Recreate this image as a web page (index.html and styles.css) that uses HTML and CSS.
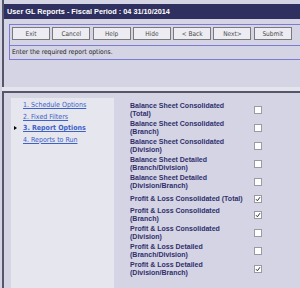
FILE: index.html
```html
<!DOCTYPE html>
<html lang="en">
<head>
  <meta charset="UTF-8">
  <title>User GL Reports</title>
  <link rel="stylesheet" href="styles.css">
</head>
<body>
  <div class="pane top">
    <div class="titlebar">User GL Reports - Fiscal Period : 04 31/10/2014</div>
    <div class="toolbox">
      <div class="buttons">
        <button>Exit</button>
        <button>Cancel</button>
        <button>Help</button>
        <button>Hide</button>
        <button>&lt; Back</button>
        <button>Next&gt;</button>
        <button>Submit</button>
      </div>
      <div class="message">Enter the required report options.</div>
    </div>
  </div>
  <div class="splitter"></div>
  <div class="pane bottom">
    <ul class="steps">
      <li><a href="#">1. Schedule Options</a></li>
      <li><a href="#">2. Fixed Filters</a></li>
      <li class="current"><a href="#">3. Report Options</a></li>
      <li><a href="#">4. Reports to Run</a></li>
    </ul>
    <table class="options">
      <tr><td class="label">Balance Sheet Consolidated<br>(Total)</td><td class="box"><span class="check"></span></td></tr>
      <tr><td class="label">Balance Sheet Consolidated<br>(Branch)</td><td class="box"><span class="check"></span></td></tr>
      <tr><td class="label">Balance Sheet Consolidated<br>(Division)</td><td class="box"><span class="check"></span></td></tr>
      <tr><td class="label">Balance Sheet Detailed<br>(Branch/Division)</td><td class="box"><span class="check"></span></td></tr>
      <tr><td class="label">Balance Sheet Detailed<br>(Division/Branch)</td><td class="box"><span class="check"></span></td></tr>
      <tr><td class="label">Profit &amp; Loss Consolidated (Total)</td><td class="box"><span class="check"><svg viewBox="0 0 6 6"><path d="M1 3.2 L2.4 4.8 L5 1.2"/></svg></span></td></tr>
      <tr><td class="label">Profit &amp; Loss Consolidated<br>(Branch)</td><td class="box"><span class="check"><svg viewBox="0 0 6 6"><path d="M1 3.2 L2.4 4.8 L5 1.2"/></svg></span></td></tr>
      <tr><td class="label">Profit &amp; Loss Consolidated<br>(Division)</td><td class="box"><span class="check"></span></td></tr>
      <tr><td class="label">Profit &amp; Loss Detailed<br>(Branch/Division)</td><td class="box"><span class="check"></span></td></tr>
      <tr><td class="label">Profit &amp; Loss Detailed<br>(Division/Branch)</td><td class="box"><span class="check"><svg viewBox="0 0 6 6"><path d="M1 3.2 L2.4 4.8 L5 1.2"/></svg></span></td></tr>
    </table>
  </div>
</body>
</html>
```

FILE: styles.css
```css
body {
  margin: 0;
  overflow: hidden;
  background: #d4d4e4;
  font-family: "DejaVu Sans Condensed", "DejaVu Sans", sans-serif;
  font-size: 6.5px;
}
.pane {
  margin-left: 2px;
  border-left: 2px solid #56566a;
}
.top {
  height: 83px;
  padding-top: 4px;
}
.titlebar {
  height: 15px;
  line-height: 15px;
  padding-left: 3px;
  background: #2f2f60;
  color: #fff;
  font-family: "Liberation Sans", sans-serif;
  font-size: 7.3px;
  font-weight: bold;
  white-space: nowrap;
}
.toolbox {
  margin: 5px 0 0 5px;
  border: 1px solid #7b7bd4;
  border-right: 0;
}
.buttons {
  display: flex;
  gap: 2.3px;
  padding: 2px 0 5px 2px;
  border-bottom: 1px solid #7b7bd4;
}
.buttons button {
  width: 38px;
  height: 13px;
  padding: 0;
  border: 1px solid #7a7a7a;
  background: #ececf2;
  color: #4a4a4a;
  font: inherit;
}
.message {
  height: 13px;
  line-height: 13px;
  padding-left: 2px;
  color: #222;
  font-size: 6.65px;
}
.splitter {
  height: 4px;
  margin-left: 2px;
  background: #e4e4ec;
}
.bottom {
  display: flex;
  align-items: flex-start;
  height: 300px;
  padding: 4px 0 0 6px;
  border-top: 2px solid #56566a;
}
.steps {
  box-sizing: border-box;
  width: 105px;
  height: 200px;
  margin: 0;
  padding: 2px 0 0 12px;
  list-style: none;
  background: #e6e6ee;
  border: 1px solid #d6d6e0;
}
.steps li {
  line-height: 11.6px;
  font-size: 7px;
}
.steps a {
  color: #3c62c8;
}
.steps .current a {
  font-weight: bold;
}
.steps .current::before {
  content: "";
  display: inline-block;
  margin: 0 6px 0 -9px;
  border-left: 3px solid #000;
  border-top: 2px solid transparent;
  border-bottom: 2px solid transparent;
}
.options {
  margin: 4px 0 0 15px;
  border-collapse: collapse;
}
.options td {
  padding: 1px 0;
  vertical-align: middle;
}
.options .label {
  width: 124px;
  line-height: 8px;
  color: #30306c;
  font-family: "Liberation Sans", sans-serif;
  font-size: 7px;
  font-weight: bold;
  white-space: nowrap;
}
.options .box {
  height: 13px;
}
.check {
  display: block;
  width: 6px;
  height: 6px;
  border: 1px solid #9a9aa4;
  background: #fff;
}
.check svg {
  display: block;
  width: 6px;
  height: 6px;
  fill: none;
  stroke: #333;
  stroke-width: 1;
}
```
